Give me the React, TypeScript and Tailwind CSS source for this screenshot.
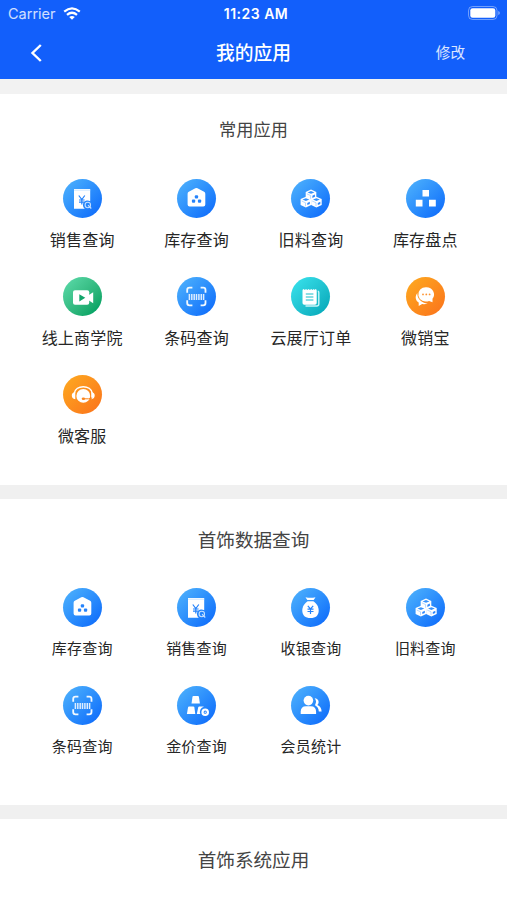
import { ReactNode } from "react"
import clsx from "clsx"

type IconName =
  | "sales"
  | "stock"
  | "material"
  | "inventory"
  | "video"
  | "scan"
  | "order"
  | "chat"
  | "service"
  | "cash"
  | "gold"
  | "member"

type AppItem = {
  label: string
  icon: IconName
}

const commonApps: AppItem[] = [
  { label: "销售查询", icon: "sales" },
  { label: "库存查询", icon: "stock" },
  { label: "旧料查询", icon: "material" },
  { label: "库存盘点", icon: "inventory" },
  { label: "线上商学院", icon: "video" },
  { label: "条码查询", icon: "scan" },
  { label: "云展厅订单", icon: "order" },
  { label: "微销宝", icon: "chat" },
  { label: "微客服", icon: "service" },
]

const dataApps: AppItem[] = [
  { label: "库存查询", icon: "stock" },
  { label: "销售查询", icon: "sales" },
  { label: "收银查询", icon: "cash" },
  { label: "旧料查询", icon: "material" },
  { label: "条码查询", icon: "scan" },
  { label: "金价查询", icon: "gold" },
  { label: "会员统计", icon: "member" },
]

const blue = "from-[#46a9fc] to-[#1472fb]"
const orange = "from-[#fda21f] to-[#fb7a1c]"

const backgrounds: Record<IconName, string> = {
  sales: blue,
  stock: blue,
  material: blue,
  inventory: blue,
  video: "from-[#52d3a0] to-[#06a566]",
  scan: blue,
  order: "from-[#33dbe6] to-[#09aebe]",
  chat: orange,
  service: orange,
  cash: blue,
  gold: blue,
  member: blue,
}

// a hexagonal box with its open top face
const Box = ({ x, y }: { x: number; y: number }) => (
  <g transform={`translate(${x} ${y})`}>
    <path d="M0-5.2 5.3-2.9V2.9L0 5.4-5.3 2.9V-2.9Z" fill="#fff" />
    <path d="M-3.4-2.4 0-3.7 3.4-2.4 0-1Z" fill="#3793fc" />
    <path d="M1.4.9 3.9-.3V1.9L1.4 3.1Z" fill="#2b86fc" />
    <path d="M-4.2-1-.4.8V4.2" fill="none" stroke="#6fb2fd" strokeWidth=".5" />
  </g>
)

const glyphs: Record<IconName, ReactNode> = {
  sales: (
    <>
      <path d="M11 10h16.2v12.3a4.4 4.4 0 0 0-5.4 7.4H11Z" fill="#fff" />
      <path d="M11 11.2h16.2" stroke="#b9dcff" strokeWidth=".7" />
      <path
        d="m15.8 16.5 3 4 3-4M18.8 20.5v5M16 21h5.6M16 23.2h5.6"
        stroke="#2583fb"
        strokeWidth="1.2"
      />
      <circle cx="24.8" cy="26" r="2.7" stroke="#c5e0ff" strokeWidth="1.1" />
      <path d="m25 26.2 3.3 3.3" stroke="#c5e0ff" strokeWidth="1.1" />
    </>
  ),
  stock: (
    <>
      <path
        d="M18.3 9.2q1.1-.6 2.2 0l6.6 3.6q1.2.7 1.2 2V25.5a2 2 0 0 1-2 2H12.6a2 2 0 0 1-2-2V14.8q0-1.3 1.2-2Z"
        fill="#fff"
      />
      <g fill="#2583fb">
        <rect x="17.8" y="16.2" width="3.3" height="3.3" rx="1" />
        <rect x="14.9" y="20.4" width="3.3" height="3.3" rx="1" />
        <rect x="20.9" y="20.4" width="3.3" height="3.3" rx="1" />
      </g>
    </>
  ),
  material: (
    <>
      <Box x={20} y={15.8} />
      <Box x={14.9} y={23} />
      <Box x={25.4} y={23} />
    </>
  ),
  inventory: (
    <path
      d="M16.5 11H23v6.5h-6.5ZM9.8 20.7h6.7v6.7H9.8ZM23 20.7h6.8v6.7H23Z"
      fill="#fff"
    />
  ),
  video: (
    <>
      <rect x="10" y="13.3" width="16.2" height="14.5" rx="2" fill="#fff" />
      <path d="M25.5 18.3 30.2 15.3V26.2L25.5 23.2Z" fill="#fff" />
      <path d="m16.3 17.2 6 3.6-6 3.6Z" fill="#12a56a" />
    </>
  ),
  scan: (
    <>
      <path
        d="M10.2 15.8V13q0-2.3 2.3-2.3h2.9M23.6 10.7h2.6q2.3 0 2.3 2.3v2.8M28.5 23.2V26q0 2.3-2.3 2.3h-2.6M15.4 28.3h-2.9q-2.3 0-2.3-2.3v-2.8"
        stroke="#f2f9ff"
        strokeWidth="1.8"
      />
      <path
        d="M12.4 17v6M14.8 17v6M17.2 17v6M19.5 17v6M21.9 17v6M24.3 17v6M26.6 17v6"
        stroke="#dcedff"
        strokeWidth="1.5"
      />
    </>
  ),
  order: (
    <>
      <path
        d="M26.8 14.3q1 .1 1 1.2V27a2 2 0 0 1-2 2H14.5"
        stroke="#c9f5f8"
        strokeWidth="1.4"
      />
      <path
        d="M11.5 13.5q0-1.5 1.3-1.5l1 1 1.2-1 1.3 1 1.3-1 1.3 1 1.3-1 1.3 1 1.3-1 1 1 .7-1q1.2 0 1.2 1.5V26a1.8 1.8 0 0 1-1.8 1.8H13.3a1.8 1.8 0 0 1-1.8-1.8Z"
        fill="#fff"
      />
      <path
        d="M14.8 17h7.6M14.8 20h7.6M14.8 23h7.6"
        stroke="#19bdca"
        strokeWidth="1.1"
      />
    </>
  ),
  chat: (
    <>
      <path
        d="M11.3 16C8.4 20 9.8 23.8 12.7 25.6V29l3.4-2q3 .5 5.6-.6C15.6 26.2 11 21.8 11.3 16Z"
        fill="#fff"
      />
      <path
        d="M20.4 10.2a7.6 7.2 0 0 1 6.1 11.5V25.2l-3.4-1.3a7.6 7.2 0 1 1-2.7-13.7Z"
        fill="#fff"
      />
      <g fill="#fd9331">
        <circle cx="17" cy="17.4" r=".9" />
        <circle cx="20.3" cy="17.4" r=".9" />
        <circle cx="23.6" cy="17.4" r=".9" />
      </g>
    </>
  ),
  service: (
    <>
      <path
        d="M11.2 18.5C12.6 9.5 28 9.5 29.4 18.5"
        stroke="#fff"
        strokeWidth="1.5"
      />
      <path
        d="M12.3 17v7.2C9.7 24 8.8 22.5 8.8 20.6s.9-3.4 3.5-3.6ZM28.2 17v7.2c2.6-.2 3.5-1.7 3.5-3.6S30.8 17.2 28.2 17Z"
        fill="#fff"
      />
      <circle cx="20.3" cy="20.9" r="6.9" fill="#fff" />
      <path d="M29.2 23q-3 1.2-8 .8" stroke="#fb851d" strokeWidth="1" />
      <ellipse cx="20.4" cy="23.8" rx="1.7" ry="1.3" fill="#fb851d" />
    </>
  ),
  cash: (
    <>
      <path d="M14.5 9.2q5 1 10 0L22.7 12H16.3Z" fill="#fff" />
      <path
        d="M16.7 13.2h5.6c3 1.8 5.4 5.4 5.4 9.2 0 5-3 7.6-8.2 7.6s-8.2-2.6-8.2-7.6c0-3.8 2.4-7.4 5.4-9.2Z"
        fill="#fff"
      />
      <path
        d="m16.8 17.8 2.7 3 2.7-3M19.5 21v5M16.5 21.2h6M16.5 23.5h6"
        stroke="#2583fb"
        strokeWidth="1.2"
      />
    </>
  ),
  gold: (
    <>
      <g fill="#fff">
        <path d="M16.4 10h4.6q.7 0 .9.7L22.9 17.4H14.5L15.5 10.7q.2-.7.9-.7Z" />
        <path d="M12 20.4h4.4q.7 0 .9.7L18.3 28H9.9L11.1 21.1q.2-.7.9-.7Z" />
        <path d="M22.2 20.4h4q.6 0 .7.4a5.3 5.3 0 0 0-3.6 7.2H19.8L21.3 21.1q.2-.7.9-.7Z" />
      </g>
      <circle cx="28.2" cy="26.2" r="2.7" stroke="#fff" strokeWidth="2.2" />
      <circle cx="28.2" cy="26.2" r=".7" fill="#fff" />
    </>
  ),
  member: (
    <>
      <circle cx="17.4" cy="14.6" r="4.8" fill="#fff" />
      <path
        d="M9.7 28v-2.2q0-5.6 5.3-5.6h4.8q5.3 0 5.3 5.6V28Z"
        fill="#fff"
      />
      <path
        d="M23.6 12.2c4.5.4 5 4.8 2.7 6.8 2.9 1.1 4.2 3.3 4.3 6.5H27.8C27.7 22.6 26.4 20.6 24.2 19.5V18.3C25.4 16.6 25.4 14.2 23.6 12.2Z"
        fill="#fff"
      />
    </>
  ),
}

const AppIcon = ({ name }: { name: IconName }) => (
  <div
    className={clsx(
      "size-[39px] rounded-full bg-linear-to-br from-15% to-85%",
      backgrounds[name]
    )}
  >
    <svg viewBox="0 0 39 39" className="size-full" fill="none">
      {glyphs[name]}
    </svg>
  </div>
)

const AppGrid = ({ items, small }: { items: AppItem[]; small?: boolean }) => (
  <div className="grid grid-cols-4 pr-[24.5px] pl-[25px]">
    {items.map((item) => (
      <button
        key={item.label}
        className="flex h-[97.8px] flex-col items-center"
      >
        <AppIcon name={item.icon} />
        <span
          className={clsx(
            "mt-[9px] leading-6 tracking-[0.2px] whitespace-nowrap text-[#262626]",
            small ? "text-[15px]" : "text-[16px]"
          )}
        >
          {item.label}
        </span>
      </button>
    ))}
  </div>
)

const StatusBar = () => (
  <div className="grid h-7 grid-cols-3 items-center pr-[7px] pl-2 font-['Inter',sans-serif]">
    <div className="flex items-center gap-[7px] text-[14.5px] text-white/80">
      Carrier
      <svg viewBox="0 0 18 13" className="-mt-0.5 h-[13px] w-[18px]" fill="none">
        <g stroke="#fff" strokeWidth="2.2">
          <path d="M1.2 4.7q7.8-6.6 15.6 0" />
          <path d="M4 7.9q5-4.3 10 0" />
        </g>
        <path d="M9 12.7 6.2 10q2.8-2 5.6 0Z" fill="#fff" />
      </svg>
    </div>
    <div className="ml-1 -mt-0.5 text-center text-[14px] font-semibold tracking-[0.5px] whitespace-nowrap">
      11:23 AM
    </div>
    <svg
      viewBox="0 0 32 14"
      className="-mt-0.5 h-3.5 w-8 justify-self-end"
      fill="none"
    >
      <rect x=".5" y=".5" width="28.5" height="13" rx="4" stroke="#fff" strokeOpacity=".4" />
      <rect x="2.3" y="2.3" width="25" height="9.4" rx="2.3" fill="#fff" />
      <path d="M30.3 5v4q1.5-.6 1.5-2t-1.5-2Z" fill="#fff" fillOpacity=".5" />
    </svg>
  </div>
)

const App = () => {
  return (
    <div className="flex h-[900px] w-full flex-col overflow-hidden bg-white font-['Noto_Sans_CJK_SC',sans-serif]">
      <header className="h-[79px] shrink-0 bg-[#125ffb] text-white">
        <StatusBar />
        <div className="grid h-[49px] grid-cols-3 items-center pr-[42px] pl-[30px]">
          <button aria-label="返回">
            <svg viewBox="0 0 12 18" className="h-[18px] w-3" fill="none">
              <path d="M10.8 1 2.5 9l8.3 8" stroke="#fff" strokeWidth="2.4" />
            </svg>
          </button>
          <h1 className="ml-3 text-center text-[18.8px] font-medium whitespace-nowrap">
            我的应用
          </h1>
          <button className="-mt-0.5 text-right text-[14.6px] text-white/85">
            修改
          </button>
        </div>
      </header>
      <main className="flex flex-col">
        <section className="h-[406px] border-t-[15px] border-[#f2f2f2]">
          <h2 className="pt-[23px] pb-[38px] text-center text-[17.2px] leading-6 text-[#444]">
            常用应用
          </h2>
          <AppGrid items={commonApps} />
        </section>
        <section className="h-80 border-t-14 border-[#f0f0f0]">
          <h2 className="pt-7 pb-[37px] text-center text-[18.6px] leading-6 text-[#444]">
            首饰数据查询
          </h2>
          <AppGrid items={dataApps} small />
        </section>
        <section className="border-t-14 border-[#f0f0f0]">
          <h2 className="pt-7 text-center text-[18.6px] leading-6 text-[#444]">
            首饰系统应用
          </h2>
        </section>
      </main>
    </div>
  )
}

export default App
